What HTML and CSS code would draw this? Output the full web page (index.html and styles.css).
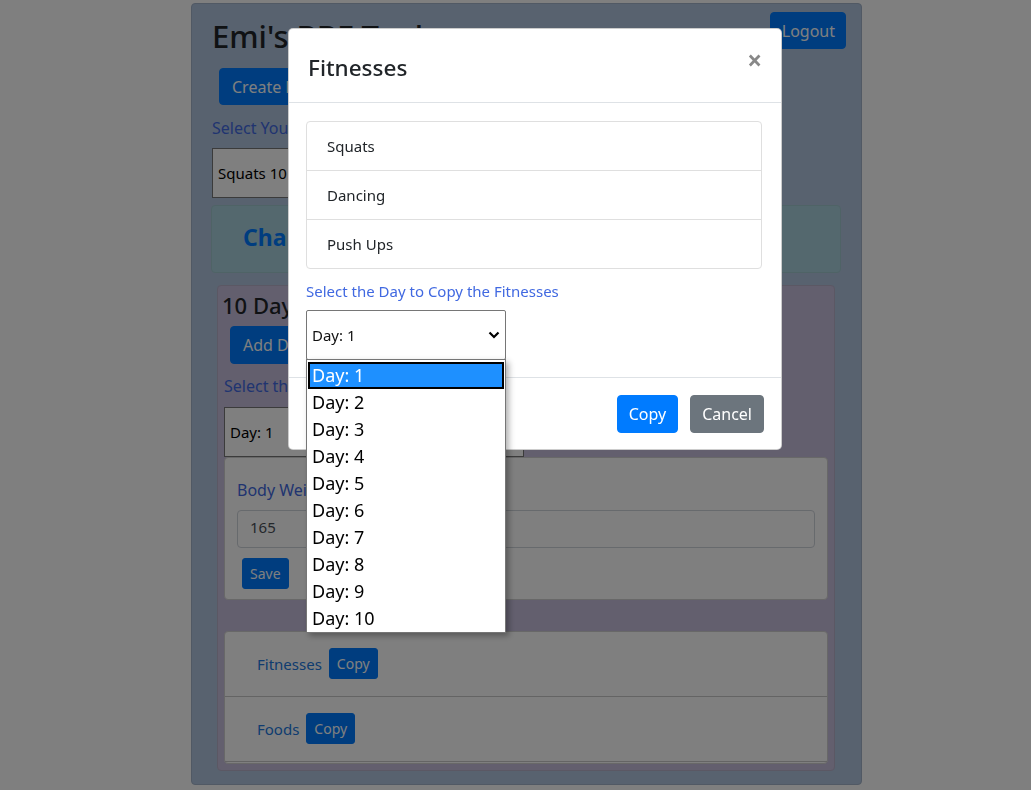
FILE: index.html
```html
<!DOCTYPE html>
<html>
<head>
<meta charset="utf-8">
<link rel="stylesheet" href="styles.css">
</head>
<body>
<div class="app">
  <div class="top">
    <h2 class="title">Emi's BBF Tool</h2>
    <button class="btn btn-primary logout">Logout</button>
  </div>
  <button class="btn btn-primary create">Create New Program</button>
  <div class="label lbl-program">Select Your Program</div>
  <div class="select program-select">Squats 10 Days</div>
  <div class="challenge">Challenge Progress</div>
  <div class="days">
    <div class="days-title">10 Days Challenge</div>
    <button class="btn btn-primary add-day">Add Day</button>
    <div class="label lbl-day">Select the Day</div>
    <div class="select day-select">Day: 1</div>
    <div class="card weight">
      <div class="label">Body Weight</div>
      <div class="input">165</div>
      <button class="btn btn-primary btn-sm">Save</button>
    </div>
    <div class="card list">
      <div class="list-row"><span class="link">Fitnesses</span><button class="btn btn-primary btn-sm">Copy</button></div>
      <div class="list-row"><span class="link">Foods</span><button class="btn btn-primary btn-sm">Copy</button></div>
    </div>
  </div>
</div>
<div class="backdrop"></div>
<div class="modal">
  <div class="modal-header">
    <h4 class="modal-title">Fitnesses</h4>
    <span class="close">&times;</span>
  </div>
  <div class="modal-body">
    <ul class="list-group">
      <li>Squats</li>
      <li>Dancing</li>
      <li>Push Ups</li>
    </ul>
    <div class="label m-label">Select the Day to Copy the Fitnesses</div>
    <div class="select-wrap">
      <div class="m-select">
        <span>Day: 1</span>
        <svg width="12" height="8" viewBox="0 0 12 8"><path d="M1.5 1.5 L6 6 L10.5 1.5" fill="none" stroke="#000" stroke-width="2.2"/></svg>
      </div>
      <ul class="dropdown">
        <li class="active">Day: 1</li>
        <li>Day: 2</li>
        <li>Day: 3</li>
        <li>Day: 4</li>
        <li>Day: 5</li>
        <li>Day: 6</li>
        <li>Day: 7</li>
        <li>Day: 8</li>
        <li>Day: 9</li>
        <li>Day: 10</li>
      </ul>
    </div>
  </div>
  <div class="modal-footer">
    <button class="btn btn-primary">Copy</button>
    <button class="btn btn-secondary">Cancel</button>
  </div>
</div>
</body>
</html>
```

FILE: styles.css
```css
* { box-sizing: border-box; }
html, body { margin: 0; padding: 0; }
body {
  background: #fff;
  font-family: "Noto Sans", "Open Sans", sans-serif;
  font-size: 16px;
  color: #212529;
  overflow: hidden;
  height: 790px;
}
.app {
  width: 671px;
  height: 782px;
  margin: 3px 0 0 191px;
  background: #b0c4de;
  border: 1px solid #a3b3c9;
  border-radius: 4px;
  padding: 8px 15px 0 20px;
  overflow: hidden;
}
.top {
  display: flex;
  justify-content: space-between;
  align-items: flex-start;
}
.title {
  margin: 6px 0 0 0;
  font-size: 31px;
  font-weight: 500;
  line-height: 1.2;
}
.btn {
  font-family: inherit;
  border: 1px solid transparent;
  border-radius: 4px;
  font-size: 16px;
  line-height: 1.5;
  padding: 5px 12px;
  color: #fff;
  cursor: pointer;
}
.btn-primary { background: #007bff; border-color: #007bff; }
.btn-secondary { background: #6c757d; border-color: #6c757d; }
.btn-sm { font-size: 14px; padding: 3px 7px; border-radius: 3px; }
.logout { height: 37px; padding: 0 10px 0 11px; }
.create { margin: 13px 0 0 7px; height: 37px; }
.label { color: #4169e1; }
.lbl-program { margin-top: 12px; }
.select {
  background: #fff;
  border: 1px solid #767676;
  height: 50px;
  display: flex;
  align-items: center;
  padding-left: 5px;
  font-size: 15px;
  color: #000;
}
.program-select { width: 300px; margin-top: 9px; }
.challenge {
  margin: 7px 5px 0 -1px;
  height: 68px;
  background: #a9d0dc;
  border: 1px solid #9ec6cd;
  border-radius: 4px;
  padding: 15px 31px;
  color: #007bff;
  font-weight: 700;
  font-size: 23px;
}
.days {
  margin: 12px 11px 0 5px;
  height: 486px;
  background: #c6bedc;
  border: 1px solid #b6b0c9;
  border-radius: 4px;
  padding: 6px 6px 0 6px;
}
.days-title { font-size: 22px; font-weight: 500; margin-left: -2px; line-height: 1.2; }
.add-day { margin: 7px 0 0 6px; height: 38px; }
.lbl-day { margin-top: 11px; }
.day-select { width: 300px; margin-top: 10px; }
.card {
  background: #fff;
  border: 1px solid #d0d0d0;
  border-radius: 4px;
}
.weight { height: 143px; padding: 21px 12px 0 12px; margin-top: 0; }
.weight .input {
  margin-top: 9px;
  height: 38px;
  border: 1px solid #ced4da;
  border-radius: 4px;
  padding: 6px 12px;
  color: #495057;
  font-size: 15px;
}
.weight .btn-sm { margin: 10px 0 0 5px; height: 31px; }
.list { margin-top: 31px; height: 133px; }
.list-row {
  display: flex;
  align-items: center;
  gap: 7px;
  height: 65px;
  padding: 0 0 0 32px;
  border-bottom: 1px solid #c8c8c8;
}
.list-row .btn-sm { height: 31px; }
.link { color: #2079e0; font-size: 15px; }

.backdrop {
  position: fixed;
  inset: 0;
  background: rgba(0,0,0,.5);
}
.modal {
  position: fixed;
  left: 288px;
  top: 28px;
  width: 494px;
  height: 422px;
  background: #fff;
  border-radius: 5px;
  border: 1px solid rgba(0,0,0,.2);
}
.modal-header {
  display: flex;
  justify-content: space-between;
  align-items: center;
  height: 74px;
  padding: 3px 19px 0 19px;
  border-bottom: 1px solid #dee2e6;
}
.modal-title { margin: 0; font-size: 22.5px; font-weight: 500; }
.close { color: #888; font-size: 26px; font-weight: 700; line-height: 1; margin-top: -14px; }
.modal-body { padding: 18px 19px 0 17px; height: 274px; }
.list-group {
  list-style: none;
  margin: 0;
  padding: 0;
  border: 1px solid #dfdfdf;
  border-radius: 4px;
}
.list-group li {
  height: 49px;
  display: flex;
  align-items: center;
  padding-left: 20px;
  font-size: 15px;
  border-top: 1px solid #dfdfdf;
}
.list-group li:first-child { border-top: none; height: 48px; }
.m-label { margin-top: 12px; font-size: 15px; }
.select-wrap { position: relative; width: 200px; margin-top: 9px; }
.m-select {
  height: 50px;
  border: 1px solid #767676;
  border-radius: 2px;
  display: flex;
  align-items: center;
  justify-content: space-between;
  padding: 0 5px 0 5px;
  font-size: 15px;
  color: #111;
}
.dropdown {
  position: absolute;
  left: 0;
  top: 49px;
  width: 200px;
  margin: 0;
  padding: 2px 0 0 1px;
  list-style: none;
  background: #fff;
  border: 1px solid #767676;
  box-shadow: 3px 3px 6px rgba(0,0,0,.3);
  z-index: 5;
}
.dropdown li {
  height: 27px;
  line-height: 27px;
  padding-left: 4px;
  font-size: 18px;
  color: #000;
}
.dropdown li.active {
  background: #1e90ff;
  color: #fff;
  border: 2px solid #000;
  line-height: 23px;
  padding-left: 2px;
  margin-right: 1px;
}
.modal-footer {
  border-top: 1px solid #dee2e6;
  height: 72px;
  display: flex;
  justify-content: flex-end;
  align-items: center;
  gap: 12px;
  padding: 0 17px 0 0;
}
.modal-footer .btn { height: 38px; padding: 5px 11px; }
```
